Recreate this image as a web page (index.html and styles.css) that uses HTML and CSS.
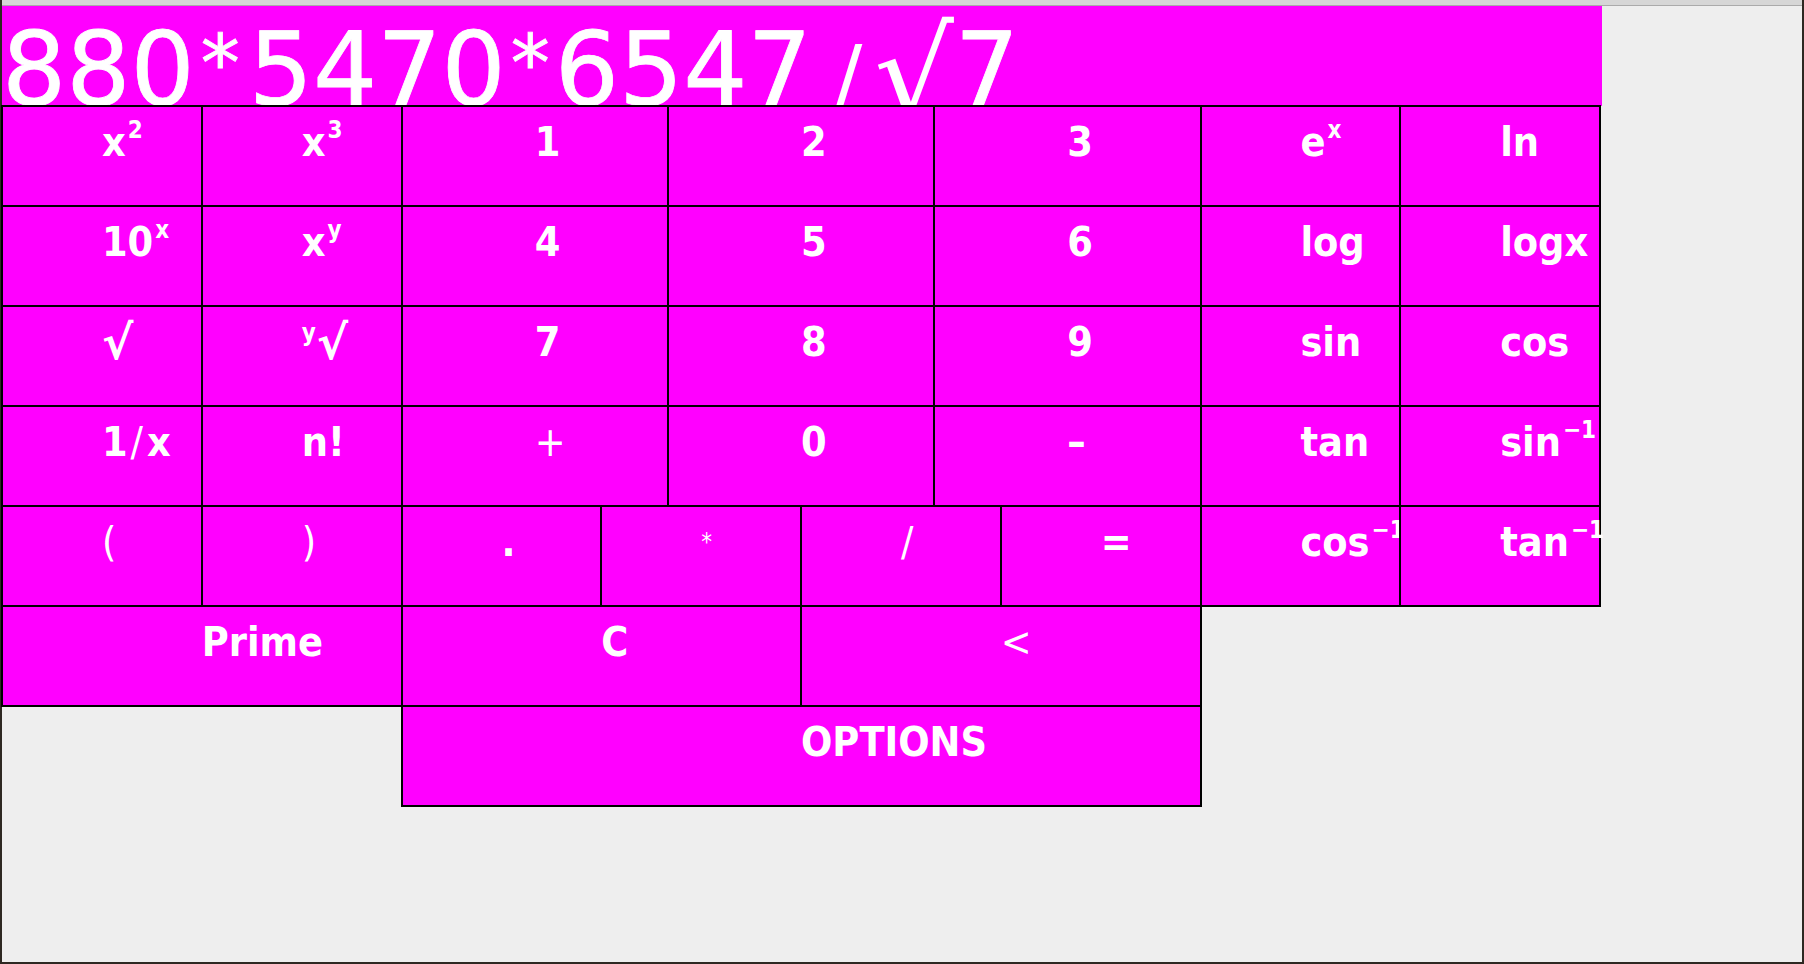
FILE: index.html
```html
<!DOCTYPE html>
<html>
<head>
<meta charset="utf-8">
<title>Calculator</title>
<link rel="stylesheet" href="styles.css">
</head>
<body>
<div class="window">
  <div class="titlebar"></div>
  <div class="display">880<span class="ast first">*</span>5470<span class="ast">*</span>6547<span class="slash">/</span><span class="root">√</span>7</div>
  <div class="keys">
    <div class="key s3">x<span class="sup">2</span></div>
    <div class="key s3">x<span class="sup">3</span></div>
    <div class="key s4">1</div>
    <div class="key s4">2</div>
    <div class="key s4">3</div>
    <div class="key s3">e<span class="sup">x</span></div>
    <div class="key s3">ln</div>

    <div class="key s3">10<span class="sup">x</span></div>
    <div class="key s3">x<span class="sup">y</span></div>
    <div class="key s4">4</div>
    <div class="key s4">5</div>
    <div class="key s4">6</div>
    <div class="key s3">log</div>
    <div class="key s3">logx</div>

    <div class="key s3"><span class="rad">√</span></div>
    <div class="key s3"><span class="sup pre">y</span><span class="rad">√</span></div>
    <div class="key s4">7</div>
    <div class="key s4">8</div>
    <div class="key s4">9</div>
    <div class="key s3">sin</div>
    <div class="key s3">cos</div>

    <div class="key s3">1<span class="thinslash">/</span>x</div>
    <div class="key s3">n!</div>
    <div class="key s4 thin">+</div>
    <div class="key s4">0</div>
    <div class="key s4">–</div>
    <div class="key s3">tan</div>
    <div class="key s3">sin<span class="sup">−1</span></div>

    <div class="key s3 thin">(</div>
    <div class="key s3 thin">)</div>
    <div class="key s3">.</div>
    <div class="key s3 thin"><span class="star">*</span></div>
    <div class="key s3 thin">/</div>
    <div class="key s3">=</div>
    <div class="key s3">cos<span class="sup">−1</span></div>
    <div class="key s3">tan<span class="sup">−1</span></div>

    <div class="key s6">Prime</div>
    <div class="key s6">C</div>
    <div class="key s6 thin">&lt;</div>

    <div class="key options">OPTIONS</div>
  </div>
</div>
</body>
</html>
```

FILE: styles.css
```css
html, body {
  margin: 0;
  padding: 0;
}

body {
  background: #2e2822;
  width: 1804px;
  height: 964px;
  overflow: hidden;
}

.window {
  margin: 0 2px;
  height: 962px;
  background: #eeeeee;
}

.titlebar {
  height: 5px;
  background: #d6d6d6;
  border-bottom: 1px solid #aaaaaa;
}

.display {
  width: 1600px;
  height: 100px;
  background: #ff00ff;
  color: #ffffff;
  font-family: "DejaVu Sans", sans-serif;
  font-size: 101px;
  line-height: 129px;
  white-space: nowrap;
  overflow: hidden;
  -webkit-text-stroke: 0.8px #ffffff;
}

.ast {
  font-size: 78px;
  line-height: 0;
  vertical-align: 15px;
  margin: 0 5px 0 5px;
}

.ast.first {
  margin: 0 9px 0 6px;
}

.slash {
  font-size: 84px;
  -webkit-text-stroke: 0;
  margin: 0 12px 0 22px;
}

.root {
  font-size: 125px;
  line-height: 0;
  vertical-align: -13px;
  -webkit-text-stroke: 0;
  margin-right: 1px;
}

.keys {
  display: grid;
  grid-template-columns: repeat(24, 1fr);
  grid-auto-rows: 100px;
  width: 1598px;
}

.key {
  margin: -1px;
  border: 2px solid #000000;
  background: #ff00ff;
  color: #ffffff;
  font-family: "DejaVu Sans Condensed", "DejaVu Sans", sans-serif;
  font-weight: bold;
  font-size: 41px;
  line-height: 48px;
  padding: 11px 0 0 calc(50% - 1px);
  white-space: nowrap;
  z-index: 0;
}

.thin {
  font-weight: normal;
}

.s3 { grid-column: span 3; }
.s4 { grid-column: span 4; }
.s6 { grid-column: span 6; }

.options {
  grid-column: 7 / span 12;
}

.sup {
  font-size: 24px;
  line-height: 0;
  vertical-align: 18px;
  margin-left: 2px;
}

.sup.pre {
  margin-left: 0;
  margin-right: 1px;
  vertical-align: 15px;
}

.rad {
  font-family: "DejaVu Sans", sans-serif;
  font-size: 47px;
  line-height: 0;
  vertical-align: -3px;
}

.thinslash {
  font-weight: normal;
  margin: 0 4px 0 3px;
}

.star {
  font-size: 24px;
  vertical-align: 14px;
}
```
